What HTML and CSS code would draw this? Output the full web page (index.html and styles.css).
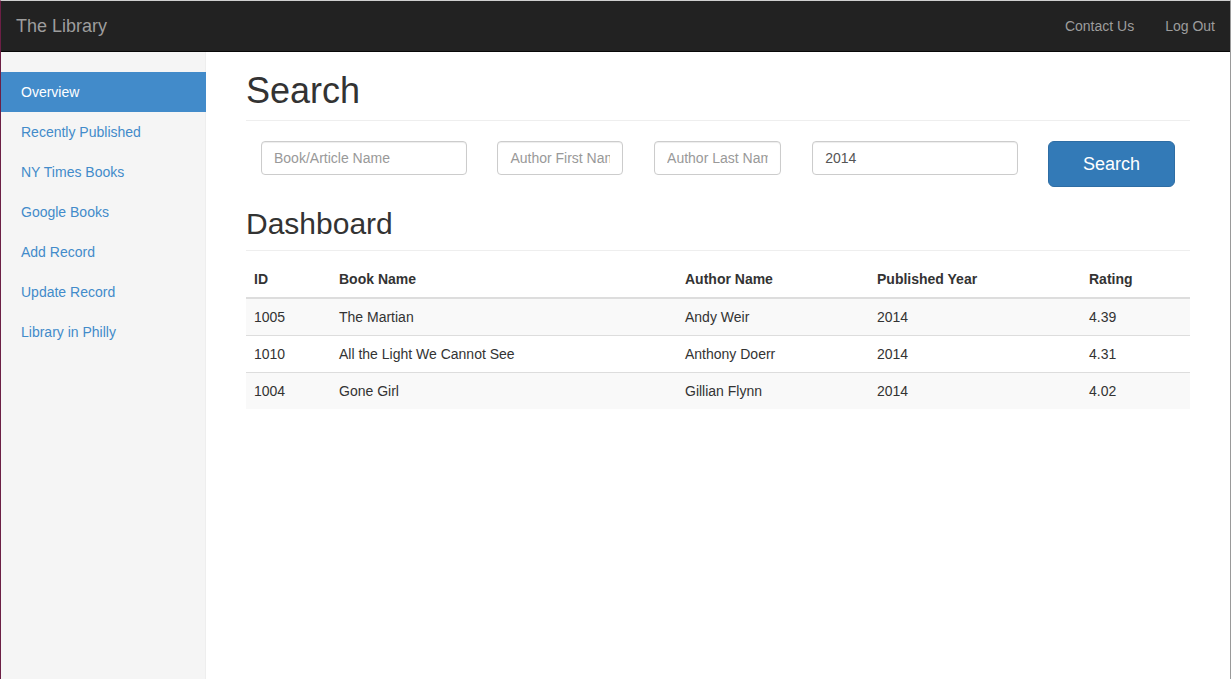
FILE: index.html
```html
<!DOCTYPE html>
<html lang="en">
<head>
<meta charset="utf-8">
<title>The Library</title>
<link rel="stylesheet" href="styles.css">
</head>
<body>
<div class="frame">
  <nav class="navbar">
    <a class="brand" href="#">The Library</a>
    <ul class="nav-right">
      <li><a href="#">Contact Us</a></li>
      <li><a href="#">Log Out</a></li>
    </ul>
  </nav>
  <div class="layout">
    <aside class="sidebar">
      <ul class="nav-sidebar">
        <li class="active"><a href="#">Overview</a></li>
        <li><a href="#">Recently Published</a></li>
        <li><a href="#">NY Times Books</a></li>
        <li><a href="#">Google Books</a></li>
        <li><a href="#">Add Record</a></li>
        <li><a href="#">Update Record</a></li>
        <li><a href="#">Library in Philly</a></li>
      </ul>
    </aside>
    <main class="main">
      <h1 class="page-header">Search</h1>
      <form class="search-form">
        <input class="form-control w1" type="text" placeholder="Book/Article Name">
        <input class="form-control w2" type="text" placeholder="Author First Name">
        <input class="form-control w3" type="text" placeholder="Author Last Name">
        <input class="form-control w4" type="text" value="2014">
        <button class="btn-search" type="button">Search</button>
      </form>
      <h2 class="sub-header">Dashboard</h2>
      <table class="table">
        <colgroup>
          <col class="c-id"><col class="c-book"><col class="c-author"><col class="c-year"><col class="c-rating">
        </colgroup>
        <thead>
          <tr><th>ID</th><th>Book Name</th><th>Author Name</th><th>Published Year</th><th>Rating</th></tr>
        </thead>
        <tbody>
          <tr><td>1005</td><td>The Martian</td><td>Andy Weir</td><td>2014</td><td>4.39</td></tr>
          <tr><td>1010</td><td>All the Light We Cannot See</td><td>Anthony Doerr</td><td>2014</td><td>4.31</td></tr>
          <tr><td>1004</td><td>Gone Girl</td><td>Gillian Flynn</td><td>2014</td><td>4.02</td></tr>
        </tbody>
      </table>
    </main>
  </div>
</div>
</body>
</html>
```
FILE: styles.css
```css
* { box-sizing: border-box; }
html, body { margin: 0; padding: 0; }
body {
  font-family: "Liberation Sans", Arial, sans-serif;
  font-size: 14px;
  line-height: 20px;
  color: #333;
  background: #fff;
}
.frame {
  min-height: 100vh;
  display: flex;
  flex-direction: column;
  border-top: 1px solid #cfcfcf;
  border-left: 1px solid #6c1f45;
  border-right: 1px solid #9a9a9a;
}
a { text-decoration: none; }

.navbar {
  height: 51px;
  background: #222;
  border-bottom: 1px solid #080808;
  display: flex;
  justify-content: space-between;
  align-items: flex-start;
  flex-shrink: 0;
}
.brand {
  display: block;
  padding: 15px;
  font-size: 18px;
  line-height: 20px;
  color: #9d9d9d;
}
.nav-right {
  list-style: none;
  margin: 0;
  padding: 0;
  display: flex;
}
.nav-right a {
  display: block;
  padding: 15px;
  line-height: 20px;
  color: #9d9d9d;
}
.nav-right li:first-child a { padding-right: 16px; padding-left: 14px; }

.layout {
  flex: 1;
  display: flex;
}
.sidebar {
  width: 205px;
  flex-shrink: 0;
  background: #f5f5f5;
  border-right: 1px solid #eee;
  padding-top: 20px;
}
.nav-sidebar {
  list-style: none;
  margin: 0 -1px 20px 0;
  padding: 0;
}
.nav-sidebar a {
  display: block;
  padding: 10px 20px;
  color: #428bca;
}
.nav-sidebar .active a {
  background: #428bca;
  color: #fff;
}

.main {
  flex: 1;
  min-width: 0;
  padding: 19px 40px 20px;
}
.page-header {
  margin: 0 0 20px;
  padding-bottom: 9px;
  border-bottom: 1px solid #eee;
  font-size: 36px;
  font-weight: 500;
  line-height: 1.1;
  color: #333;
}
.search-form {
  display: flex;
  align-items: flex-start;
  gap: 30.7px;
  padding-left: 15px;
}
.form-control {
  display: block;
  height: 34px;
  padding: 6px 12px;
  font-family: inherit;
  font-size: 14px;
  line-height: 20px;
  color: #555;
  background: #fff;
  border: 1px solid #ccc;
  border-radius: 4px;
  box-shadow: inset 0 1px 1px rgba(0,0,0,.075);
  flex-shrink: 0;
}
.form-control::placeholder { color: #999; opacity: 1; }
.w1 { width: 205.7px; }
.w2 { width: 126px; }
.w3 { width: 127.4px; }
.w4 { width: 205.4px; }
.btn-search {
  width: 126.7px;
  height: 46px;
  flex-shrink: 0;
  padding: 10px 16px;
  font-family: inherit;
  font-size: 18px;
  line-height: 24px;
  color: #fff;
  background: #337ab7;
  border: 1px solid #2e6da4;
  border-radius: 6px;
}
.sub-header {
  margin: 20px 0 10px;
  padding-bottom: 10px;
  border-bottom: 1px solid #eee;
  font-size: 30px;
  font-weight: 500;
  line-height: 1.1;
  color: #333;
}
.table {
  width: 100%;
  border-collapse: collapse;
  border-spacing: 0;
  table-layout: fixed;
  margin-bottom: 20px;
}
.c-id { width: 85px; }
.c-book { width: 346px; }
.c-author { width: 192px; }
.c-year { width: 212px; }
.c-rating { width: 109px; }
.table th, .table td {
  padding: 8px;
  text-align: left;
  line-height: 20px;
  vertical-align: top;
  border-top: 1px solid #ddd;
}
.table thead th {
  vertical-align: bottom;
  border-top: 0;
  border-bottom: 2px solid #ddd;
  font-weight: bold;
}
.table tbody tr:first-child td { border-top: 0; }
.table tbody tr:nth-child(odd) { background: #f9f9f9; }
```
